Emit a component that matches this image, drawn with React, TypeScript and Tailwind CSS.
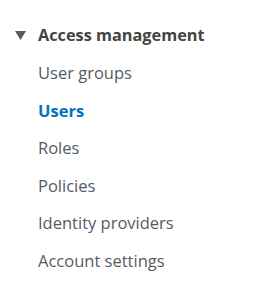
import React from 'react';

const ITEMS = ['User groups', 'Users', 'Roles', 'Policies', 'Identity providers', 'Account settings'];
const ACTIVE = 'Users';

const App: React.FC = () => {
  return (
    <div className="w-[272px] h-[297px] bg-white font-['Open_Sans',sans-serif] pt-[23px]">
      {/* Section header */}
      <div className="flex items-center h-[24px] pl-[15px]">
        <svg width="11" height="9" viewBox="0 0 11 9" className="mr-[12px]">
          <polygon points="0,0 11,0 5.5,9" fill="#545b64" />
        </svg>
        <span className="text-[16.3px] font-bold text-[#444]">Access management</span>
      </div>

      {/* Links */}
      <ul className="pl-[38px] pt-[14px] flex flex-col gap-[13.6px]">
        {ITEMS.map((item) => (
          <li
            key={item}
            className={
              item === ACTIVE
                ? 'h-[24px] leading-[24px] text-[16.5px] font-bold text-[#0073bb]'
                : 'h-[24px] leading-[24px] text-[16.5px] text-[#545b64]'
            }
          >
            {item}
          </li>
        ))}
      </ul>
    </div>
  );
};

export default App;
